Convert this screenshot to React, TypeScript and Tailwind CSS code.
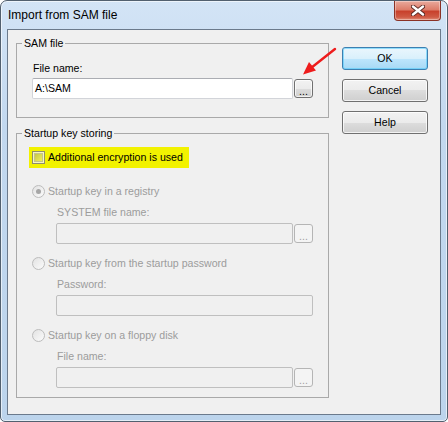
import React from "react";

const ui = "font-['Liberation_Sans',Arial,sans-serif] text-[10.6px] leading-[13px]";

function TextBox({ value, disabled }: { value?: string; disabled?: boolean }) {
  if (disabled) {
    return <div className="h-[21px] flex-1 rounded-[2px] border border-[#bfbfbf] bg-[#f0f0f0]" />;
  }
  return (
    <div className="flex h-[21px] flex-1 items-center rounded-[2px] border border-[#d2d4d9] border-t-[#abadb3] bg-white pl-[2px] text-black">
      {value}
    </div>
  );
}

function DotsButton({ disabled }: { disabled?: boolean }) {
  return (
    <div
      className={
        disabled
          ? "ml-px flex h-[19px] w-[19px] items-end justify-center rounded-[3px] border border-[#b5b5b5] bg-[#f4f4f4] pb-[2px] text-[#a0a0a0]"
          : "ml-px flex h-[19px] w-[19px] items-end justify-center rounded-[3px] border border-[#707070] bg-[linear-gradient(180deg,#f2f2f2_0%,#ebebeb_50%,#dddddd_50%,#cfcfcf_100%)] pb-[2px] text-black shadow-[inset_0_0_0_1px_rgba(255,255,255,0.7)]"
      }
    >
      <span className="leading-[8px]">...</span>
    </div>
  );
}

function Radio({ checked }: { checked?: boolean }) {
  return (
    <span className="flex h-[13px] w-[13px] shrink-0 items-center justify-center rounded-full border border-[#bcbcbc] bg-[linear-gradient(135deg,#e2e2e2,#fbfbfb)]">
      {checked && <span className="h-[5px] w-[5px] rounded-full bg-[#a6a6a6]" />}
    </span>
  );
}

function PushButton({ label, primary }: { label: string; primary?: boolean }) {
  return (
    <div
      className={
        primary
          ? "flex h-[23px] items-center justify-center rounded-[3px] border border-[#3c7fb1] bg-[linear-gradient(180deg,#eaf6fd_0%,#d9f0fc_50%,#bee6fd_50%,#a7d9f5_100%)] text-black shadow-[inset_0_0_0_1px_rgba(72,200,250,0.55)]"
          : "flex h-[23px] items-center justify-center rounded-[3px] border border-[#707070] bg-[linear-gradient(180deg,#f2f2f2_0%,#ebebeb_50%,#dddddd_50%,#cfcfcf_100%)] text-black shadow-[inset_0_0_0_1px_rgba(255,255,255,0.75)]"
      }
    >
      {label}
    </div>
  );
}

function Group({ title, children }: { title: string; children: React.ReactNode }) {
  return (
    <div className="flex flex-col border border-[#a9a9a9]">
      <div className="-mt-[7px] ml-[5px] w-fit bg-[#f0f0f0] px-[2px] text-black">{title}</div>
      {children}
    </div>
  );
}

function KeyOption({
  label,
  field,
  checked,
  browse,
  first,
}: {
  label: string;
  field: string;
  checked?: boolean;
  browse?: boolean;
  first?: boolean;
}) {
  return (
    <div className={first ? "mt-[17px] flex flex-col" : "mt-[13px] flex flex-col"}>
      <div className="ml-[15px] flex items-center gap-[3px] text-[#9c9c9c]">
        <Radio checked={checked} />
        <span>{label}</span>
      </div>
      <div className="ml-[39px] mr-[15px] mt-[8px] pl-px text-[#9c9c9c]">{field}</div>
      <div className="ml-[39px] mr-[15px] mt-[4px] flex items-center">
        <TextBox disabled />
        {browse ? <DotsButton disabled /> : null}
      </div>
    </div>
  );
}

export default function App() {
  return (
    <div className={`relative h-[422px] w-[448px] bg-white ${ui}`}>
      <div className="flex h-full w-full flex-col rounded-t-[7px] rounded-b-[5px] border border-[#52606f] bg-[linear-gradient(180deg,#d3e4f6_0%,#c2d8ef_30%,#bcd4ec_100%)] shadow-[inset_0_0_0_1px_rgba(255,255,255,0.6)]">
        {/* title bar */}
        <div className="flex h-[28px] shrink-0 pl-[7px]">
          <span className="self-center text-[12px] text-black">Import from SAM file</span>
          <div className="ml-auto mr-[6px] flex h-[20px] w-[47px] items-center justify-center rounded-b-[4px] border border-t-0 border-[#8a3226] bg-[linear-gradient(180deg,#e9aa9d_0%,#dd7d6a_45%,#c8412c_55%,#cf5a44_85%,#e2907b_100%)] shadow-[inset_0_0_0_1px_rgba(255,255,255,0.35)]">
            <svg width="14" height="11" viewBox="0 0 14 11">
              <path d="M2 1.5 L12 9.5 M12 1.5 L2 9.5" stroke="#5a2a24" strokeWidth="4.2" strokeLinecap="round" />
              <path d="M2 1.5 L12 9.5 M12 1.5 L2 9.5" stroke="#ffffff" strokeWidth="2.4" strokeLinecap="round" />
            </svg>
          </div>
        </div>

        {/* client area */}
        <div className="mx-[6px] mb-[6px] flex flex-1 gap-[13px] border border-[#6b7a8c] bg-[#f0f0f0] pl-[8px] pr-[12px] pt-[13px]">
          <div className="flex w-[313px] flex-col">
            <Group title="SAM file">
              <div className="ml-[15px] mt-[12px] pl-px text-black">File name:</div>
              <div className="ml-[15px] mr-[15px] mt-[3px] mb-[18px] flex items-center">
                <TextBox value="A:\SAM" />
                <DotsButton />
              </div>
            </Group>

            <div className="mt-[15px]">
              <Group title="Startup key storing">
                <div className="ml-[12px] mt-[7px] flex h-[21px] w-[160px] items-center gap-[3px] bg-[#f2f200] pl-[3px] text-black">
                  <span className="flex h-[13px] w-[13px] items-center justify-center border border-[#8e8e6e] bg-[#f6f6c0]">
                    <span className="h-[9px] w-[9px] border border-[#c4c48a] bg-[linear-gradient(135deg,#c6c64a,#f0f05a)]" />
                  </span>
                  <span>Additional encryption is used</span>
                </div>

                <KeyOption first checked browse label="Startup key in a registry" field="SYSTEM file name:" />
                <KeyOption label="Startup key from the startup password" field="Password:" />
                <div className="mb-[9px]">
                  <KeyOption browse label="Startup key on a floppy disk" field="File name:" />
                </div>
              </Group>
            </div>
          </div>

          <div className="mt-[4px] flex w-[86px] flex-col gap-[9px]">
            <PushButton primary label="OK" />
            <PushButton label="Cancel" />
            <PushButton label="Help" />
          </div>
        </div>
      </div>

      {/* red annotation arrow */}
      <svg className="pointer-events-none absolute left-0 top-0" width="448" height="422">
        <line x1="335" y1="49" x2="311" y2="68" stroke="#ee1c1c" strokeWidth="2.4" strokeLinecap="round" />
        <polygon points="303,74.5 316,70.5 309,62" fill="#ee1c1c" />
      </svg>
    </div>
  );
}
